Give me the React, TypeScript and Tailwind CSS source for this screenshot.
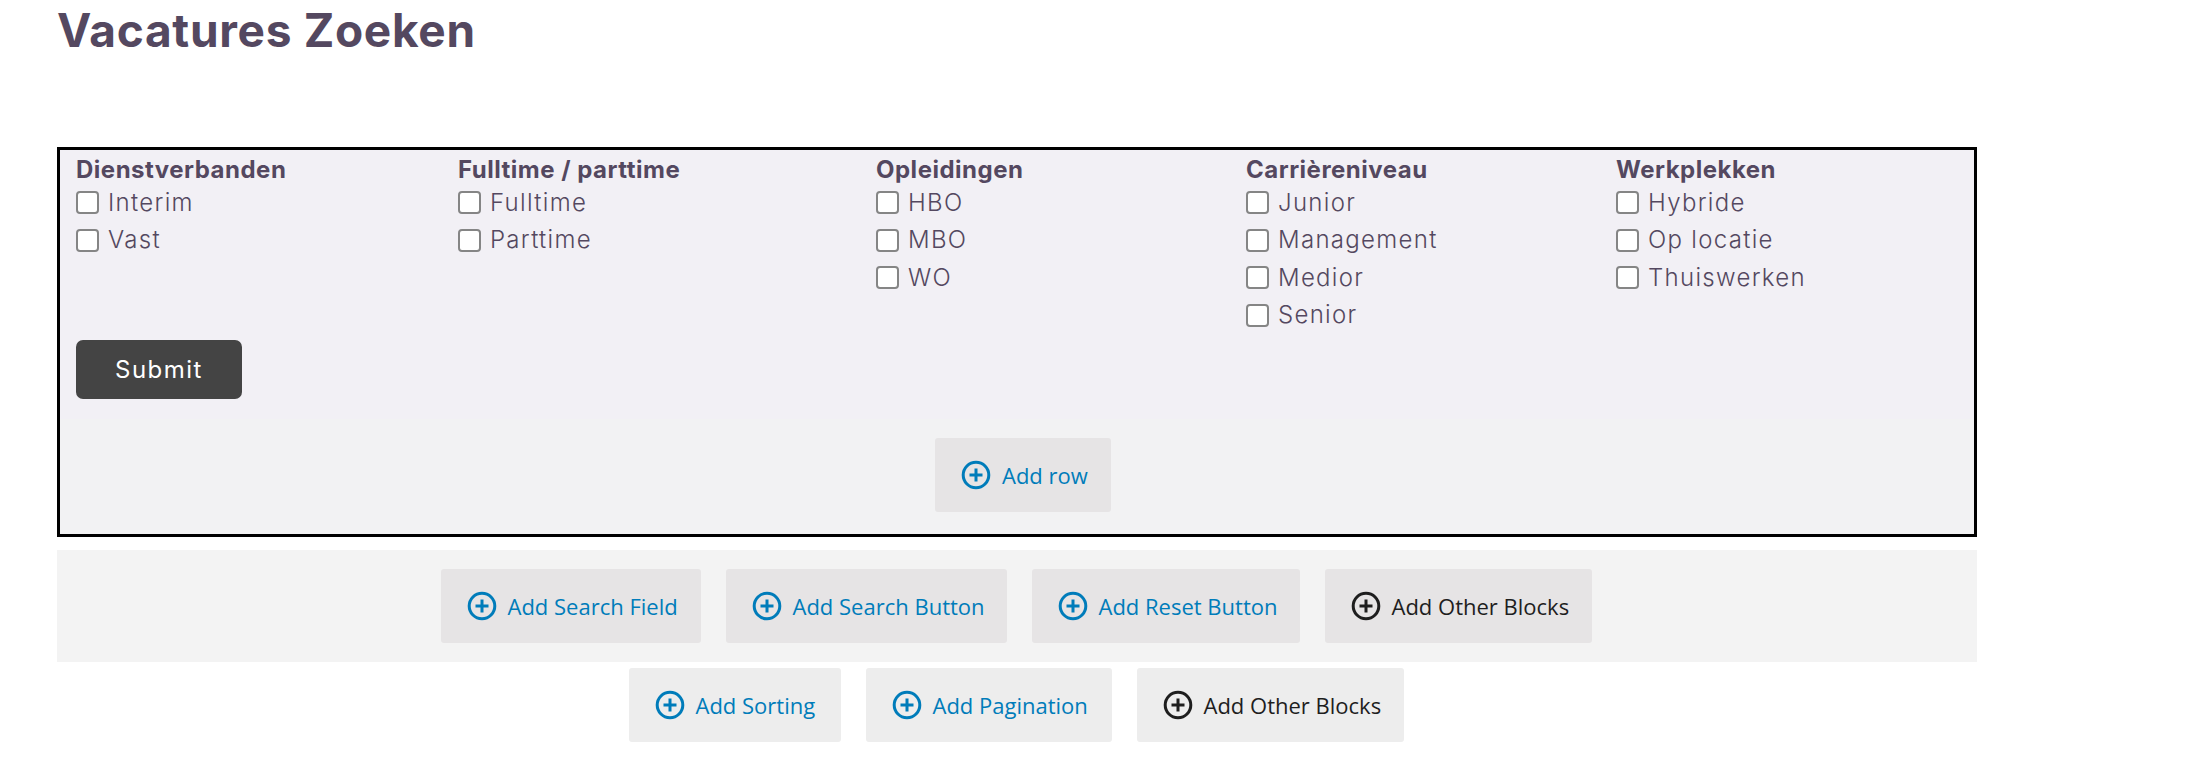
const checkboxColumns = [
  { title: "Dienstverbanden", options: ["Interim", "Vast"] },
  { title: "Fulltime / parttime", options: ["Fulltime", "Parttime"] },
  { title: "Opleidingen", options: ["HBO", "MBO", "WO"] },
  { title: "Carrièreniveau", options: ["Junior", "Management", "Medior", "Senior"] },
  { title: "Werkplekken", options: ["Hybride", "Op locatie", "Thuiswerken"] },
];

const PlusCircle = ({ color }: { color: string }) => (
  <svg width="30" height="30" viewBox="0 0 30 30" fill="none" className="shrink-0">
    <circle cx="15" cy="15" r="12.8" stroke={color} strokeWidth="3" />
    <path d="M15 8.5v13M8.5 15h13" stroke={color} strokeWidth="3" />
  </svg>
);

const AddButton = ({
  label,
  width,
  dark = false,
  light = false,
}: {
  label: string;
  width: string;
  dark?: boolean;
  light?: boolean;
}) => (
  <div
    className={`flex h-[74px] items-center gap-[11px] rounded-[3px] pl-[26px] font-['Open_Sans',sans-serif] text-[22px] ${width} ${
      light ? "bg-[#ededed]" : "bg-[#e6e4e5]"
    } ${dark ? "text-[#1e1e1e]" : "text-[#007cba]"}`}
  >
    <PlusCircle color={dark ? "#1e1e1e" : "#007cba"} />
    <span className="pt-[1px]">{label}</span>
  </div>
);

export default function App() {
  return (
    <div className="min-h-[762px] bg-white pl-[57px] font-['Inter',sans-serif] text-[#544860]">
      <div className="w-[1920px]">
        <h1 className="h-[147px] pt-[2px] text-[46px] font-bold leading-[56px] tracking-[0.7px]">Vacatures Zoeken</h1>

        {/* Form block */}
        <div className="border-[3px] border-black bg-[#f2f0f5]">
          <div className="h-[269px] px-[16px] pt-[4px]">
            <div className="grid grid-cols-[382px_418px_370px_370px_1fr]">
              {checkboxColumns.map((col) => (
                <div key={col.title}>
                  <div className="mb-[-1px] text-[24px] font-bold leading-[31px] tracking-[0.5px]">{col.title}</div>
                  {col.options.map((opt) => (
                    <label
                      key={opt}
                      className="flex h-[37.5px] items-center gap-[9px] text-[24px] font-light tracking-[1.3px]"
                    >
                      <input
                        type="checkbox"
                        className="m-0 h-[23px] w-[23px] appearance-none rounded-[4px] border-2 border-[#858585] bg-white"
                      />
                      <span>{opt}</span>
                    </label>
                  ))}
                </div>
              ))}
            </div>
            <button className="mt-[6px] block h-[59px] w-[166px] rounded-[7px] bg-[#444444] text-[24px] tracking-[1.5px] text-white">
              Submit
            </button>
          </div>
          <div className="flex h-[115px] justify-center bg-[#f2f2f3] pl-[12px] pt-[19px]">
            <AddButton label="Add row" width="w-[176px]" />
          </div>
        </div>

        {/* Block appenders */}
        <div className="mt-[13px] flex h-[112px] items-center justify-center gap-[25px] bg-[#f3f3f3] pr-[2px]">
          <AddButton label="Add Search Field" width="w-[260px]" />
          <AddButton label="Add Search Button" width="w-[281px]" />
          <AddButton label="Add Reset Button" width="w-[268px]" />
          <AddButton label="Add Other Blocks" width="w-[267px]" dark />
        </div>
        <div className="mt-[6px] flex justify-center gap-[25px] pr-[2px]">
          <AddButton label="Add Sorting" width="w-[212px]" light />
          <AddButton label="Add Pagination" width="w-[246px]" light />
          <AddButton label="Add Other Blocks" width="w-[267px]" dark light />
        </div>
      </div>
    </div>
  );
}
